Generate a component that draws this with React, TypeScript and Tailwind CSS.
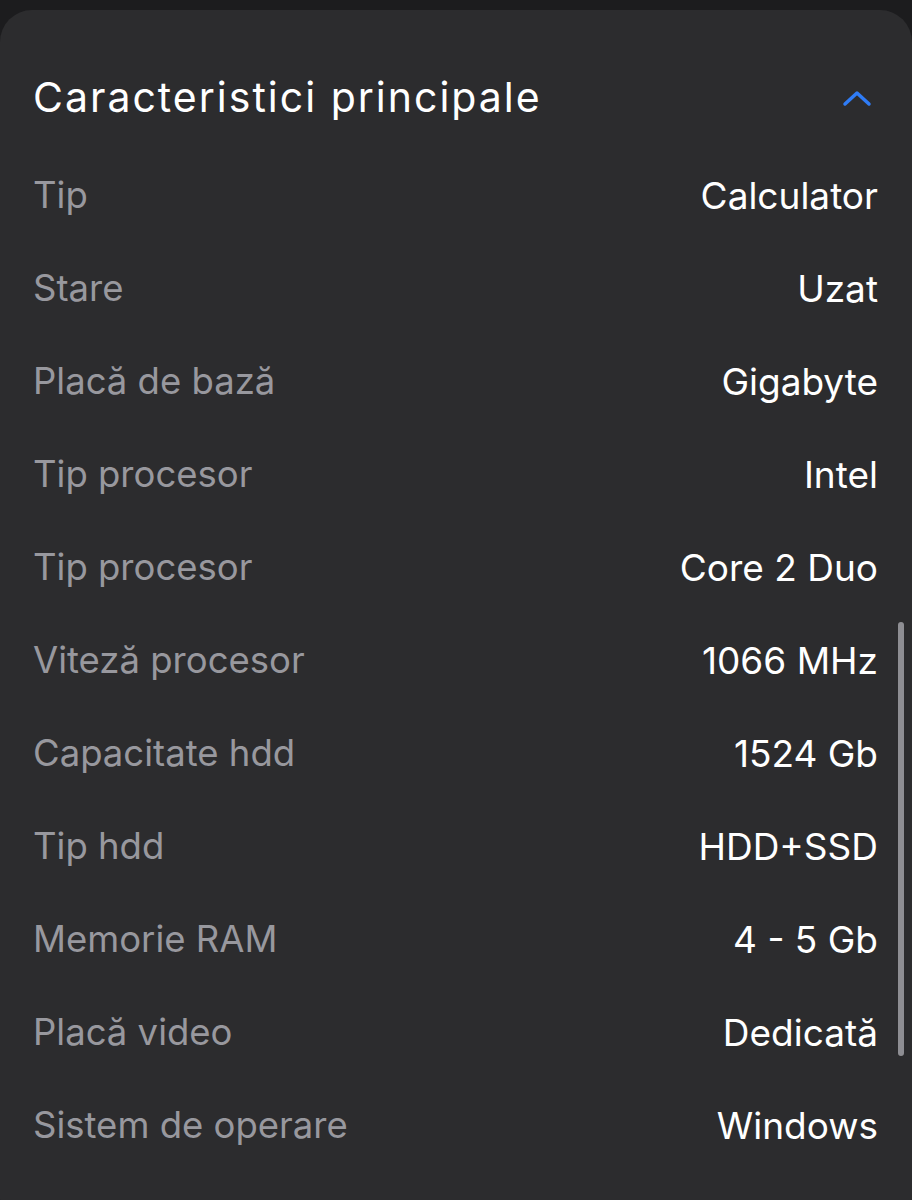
const rows: [string, string][] = [
  ["Tip", "Calculator"],
  ["Stare", "Uzat"],
  ["Placă de bază", "Gigabyte"],
  ["Tip procesor", "Intel"],
  ["Tip procesor", "Core 2 Duo"],
  ["Viteză procesor", "1066 MHz"],
  ["Capacitate hdd", "1524 Gb"],
  ["Tip hdd", "HDD+SSD"],
  ["Memorie RAM", "4 - 5 Gb"],
  ["Placă video", "Dedicată"],
  ["Sistem de operare", "Windows"],
];

export default function App() {
  return (
    <div className="w-[912px] h-[1200px] overflow-hidden bg-[#1c1c1e] pt-[10px] font-['Inter',sans-serif]">
      <div className="relative h-[1220px] rounded-[32px] bg-[#2c2c2e] px-[33px] pt-[36px]">
        {/* header */}
        <div className="flex h-[103px] items-center justify-between">
          <h2 className="text-[41px] leading-none text-white tracking-[2px]">
            Caracteristici principale
          </h2>
          <svg width="30" height="18" viewBox="0 0 30 18" className="mr-[7px]">
            <path
              d="M3 15 L15 4 L27 15"
              fill="none"
              stroke="#2f7cf6"
              strokeWidth="3.5"
              strokeLinecap="round"
              strokeLinejoin="round"
            />
          </svg>
        </div>

        {/* rows */}
        <div className="flex flex-col">
          {rows.map(([label, value], i) => (
            <div key={i} className="flex h-[93px] items-center justify-between pr-[1px]">
              <span className="text-[36.5px] leading-none text-[#98989e]">{label}</span>
              <span className="text-[37px] leading-none text-white">{value}</span>
            </div>
          ))}
        </div>

        {/* scrollbar */}
        <div className="absolute right-[8px] top-[612px] h-[434px] w-[6px] rounded-full bg-[#8e8e93]" />
      </div>
    </div>
  );
}
